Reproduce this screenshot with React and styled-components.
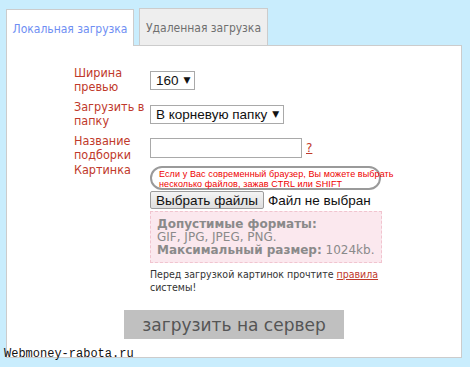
import React from "react";
import styled, { createGlobalStyle } from "styled-components";

const GlobalStyle = createGlobalStyle`
  html, body {
    margin: 0;
    padding: 0;
    background: #c9edfd;
  }
  body {
    font-family: "DejaVu Sans", Verdana, sans-serif;
  }
`;

const Page = styled.div`
  position: relative;
  width: 470px;
  height: 367px;
  padding: 8px 0 0 6px;
  box-sizing: border-box;
`;

const Tabs = styled.div`
  display: flex;
  gap: 5px;
  align-items: flex-end;
`;

const Tab = styled.div`
  width: ${(p) => p.$w}px;
  height: 37px;
  box-sizing: border-box;
  border: 1px solid #cccccc;
  border-bottom: none;
  background: ${(p) => (p.$active ? "#ffffff" : "#eeeeee")};
  color: ${(p) => (p.$active ? "#6e8ef3" : "#6f6f6f")};
  font-family: "DejaVu Sans Condensed", "DejaVu Sans", sans-serif;
  font-size: 12px;
  white-space: nowrap;
  display: flex;
  align-items: center;
  justify-content: center;
  padding-top: 2px;
  margin-bottom: ${(p) => (p.$active ? "-1px" : "0")};
  position: relative;
  z-index: 1;
`;

const Panel = styled.div`
  width: 456px;
  height: 313px;
  box-sizing: border-box;
  border: 1px solid #cccccc;
  background: #ffffff;
  padding: 18px 0 0 67px;
`;

const Row = styled.div`
  display: flex;
  align-items: ${(p) => (p.$top ? "flex-start" : "center")};
  min-height: 32px;
  margin-bottom: 2px;
`;

const Label = styled.div`
  width: 76px;
  flex-shrink: 0;
  color: #c0392b;
  font-family: "DejaVu Sans Condensed", "DejaVu Sans", sans-serif;
  font-size: 12.5px;
  line-height: 14px;
  white-space: nowrap;
  margin-top: ${(p) => (p.$shift ? "-3px" : "0")};
`;

const Field = styled.div`
  display: flex;
  flex-direction: column;
  align-items: flex-start;
`;

const Inline = styled.div`
  display: flex;
  align-items: center;
`;

const Select = styled.div`
  height: 19px;
  box-sizing: border-box;
  border: 1px solid #a9a9a9;
  background: #fff;
  color: #111;
  font-family: "Liberation Sans", Arial, sans-serif;
  font-size: 13.5px;
  display: flex;
  align-items: center;
  gap: 5px;
  padding: 0 4px 0 5px;
  &::after {
    content: "▼";
    font-family: "DejaVu Sans", sans-serif;
    font-size: 9px;
  }
`;

const TextInput = styled.div`
  width: 152px;
  height: 20px;
  box-sizing: border-box;
  border: 1px solid #a9a9a9;
`;

const Help = styled.a`
  color: #c0392b;
  font-size: 12px;
  margin-left: 4px;
  text-decoration: underline;
`;

const Hint = styled.div`
  width: 231px;
  box-sizing: border-box;
  border: 2px solid #9a9a9a;
  border-radius: 12px;
  padding: 1px 4px 0 7px;
  height: 24px;
  color: #ee0000;
  font-family: "Liberation Sans", Arial, sans-serif;
  font-size: 9px;
  letter-spacing: 0.1px;
  line-height: 10px;
  white-space: nowrap;
`;

const FileRow = styled.div`
  display: flex;
  align-items: center;
  margin-top: 1px;
  font-family: "Liberation Sans", Arial, sans-serif;
  font-size: 13.5px;
  color: #111;
  white-space: nowrap;
`;

const FileButton = styled.div`
  height: 18px;
  box-sizing: border-box;
  border: 1px solid #9c9c9c;
  border-radius: 2px;
  background: linear-gradient(#f4f4f4, #dedede);
  padding: 0 5px;
  display: flex;
  align-items: center;
  margin-right: 4px;
`;

const Formats = styled.div`
  width: 232px;
  box-sizing: border-box;
  margin-top: 2px;
  border: 1px dashed #f1c4cf;
  background: #fbe8ee;
  color: #8a8a8a;
  font-size: 12px;
  line-height: 13px;
  padding: 6px 6px 5px;
`;

const Note = styled.div`
  margin-top: 5px;
  color: #333;
  font-family: "DejaVu Sans Condensed", "DejaVu Sans", sans-serif;
  font-size: 10.5px;
  line-height: 13px;
  white-space: nowrap;
  a {
    color: #c0392b;
    text-decoration: underline;
  }
`;

const Submit = styled.div`
  width: 220px;
  height: 29px;
  margin: 16px 0 0 50px;
  background: #c0c0c0;
  color: #555555;
  font-size: 17px;
  display: flex;
  align-items: center;
  justify-content: center;
`;

const Watermark = styled.div`
  position: absolute;
  left: 4px;
  top: 347px;
  font-family: "Liberation Mono", "Courier New", monospace;
  font-size: 12px;
  color: #111;
`;

export default function App() {
  return (
    <Page>
      <GlobalStyle />
      <Tabs>
        <Tab $active $w={128}>Локальная загрузка</Tab>
        <Tab $w={129}>Удаленная загрузка</Tab>
      </Tabs>
      <Panel>
        <Row>
          <Label>Ширина<br />превью</Label>
          <Select>160</Select>
        </Row>
        <Row>
          <Label>Загрузить в<br />папку</Label>
          <Select>В корневую папку</Select>
        </Row>
        <Row>
          <Label>Название<br />подборки</Label>
          <Inline>
            <TextInput />
            <Help>?</Help>
          </Inline>
        </Row>
        <Row $top>
          <Label $shift>Картинка</Label>
          <Field>
            <Hint>
              Если у Вас современный браузер, Вы можете выбрать
              <br />
              несколько файлов, зажав CTRL или SHIFT
            </Hint>
            <FileRow>
              <FileButton>Выбрать файлы</FileButton>
              Файл не выбран
            </FileRow>
            <Formats>
              <b>Допустимые форматы:</b>
              <br />
              GIF, JPG, JPEG, PNG.
              <br />
              <b>Максимальный размер:</b> 1024kb.
            </Formats>
            <Note>
              Перед загрузкой картинок прочтите <a>правила</a>
              <br />
              системы!
            </Note>
          </Field>
        </Row>
        <Submit>загрузить на сервер</Submit>
      </Panel>
      <Watermark>Webmoney-rabota.ru</Watermark>
    </Page>
  );
}
